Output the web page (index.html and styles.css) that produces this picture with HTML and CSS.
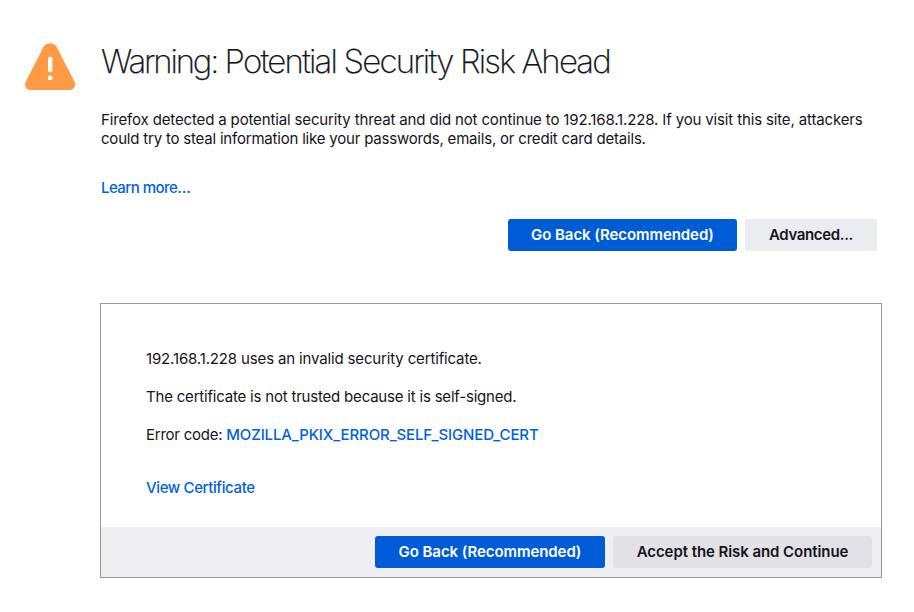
FILE: index.html
```html
<!DOCTYPE html>
<html lang="en">
<head>
<meta charset="utf-8">
<title>Warning: Potential Security Risk Ahead</title>
<link rel="stylesheet" href="styles.css">
</head>
<body>
<main class="page">
  <svg class="warning-icon" viewBox="0 0 50 48" aria-hidden="true">
    <path class="tri" d="M18.500 4C21.300 -1 28.900 -1 31.700 4L49.400 38.500C51.500 42.500 49 47 44.500 47H5.700C1.200 47 -1.300 42.500 .8 38.500Z"/>
    <rect class="mark" x="23" y="13.800" width="4.400" height="15.400" rx="1.800"/>
    <rect class="mark" x="23" y="32.500" width="4.400" height="4.500" rx="1.600"/>
  </svg>
  <div class="content">
    <h1><span class="lead">Warning:</span> Potential Security Risk Ahead</h1>
    <p class="intro"><span class="l1">Firefox detected a potential security threat and did not continue to 192.168.1.228. If you visit this site, attackers</span><br><span class="l2">could try to steal information like your passwords, emails, or credit card details.</span></p>
    <p class="learn"><a>Learn more…</a></p>
    <div class="actions">
      <button class="primary back-top">Go Back (Recommended)</button>
      <button class="secondary advanced">Advanced...</button>
    </div>
    <section class="panel">
      <div class="details">
        <p>192.168.1.228 uses an invalid security certificate.</p>
        <p class="reason">The certificate is not trusted because it is self-signed.</p>
        <p><span class="label">Error code: </span><a class="code">MOZILLA_PKIX_ERROR_SELF_SIGNED_CERT</a></p>
        <p class="view"><a>View Certificate</a></p>
      </div>
      <div class="footer">
        <button class="primary back-bottom">Go Back (Recommended)</button>
        <button class="secondary accept">Accept the Risk and Continue</button>
      </div>
    </section>
  </div>
</main>
</body>
</html>
```
FILE: styles.css
```css
* { box-sizing: border-box; }
body { margin: 0; background: #fff; color: #15141a; font: 15px/19px Inter, "Liberation Sans", sans-serif; letter-spacing: -.15px; }
.page { display: flex; height: 612px; padding: 43px 32px 0 25px; }
.warning-icon { flex: none; width: 50px; height: 48px; }
.tri { fill: #ff9a44; }
.mark { fill: #fff; }
.content { width: 782px; flex: none; margin-left: 25px; }
h1, p { margin: 0; white-space: nowrap; }
h1 { height: 38px; padding-left: 1px; font-size: 33px; line-height: 36px; font-weight: 200; letter-spacing: -1.83px; -webkit-text-stroke: .25px #15141a; }
.lead { letter-spacing: -2.18px; }
.intro { margin-top: 29px; padding-left: 1px; }
.l1 { letter-spacing: -.145px; }
.l2, .reason { letter-spacing: -.2px; }
.learn { margin-top: 30px; padding-left: 1px; }
a { color: #0061e0; font-weight: 450; }
.learn a { letter-spacing: -.55px; }
.label { letter-spacing: -.25px; }
.code { letter-spacing: -.12px; }
.actions { display: flex; justify-content: flex-end; gap: 8px; margin-top: 22px; padding-right: 5px; }
button { height: 32px; padding: 0; border: 0; border-radius: 3px; font: 600 15px/32px Inter, "Liberation Sans", sans-serif; letter-spacing: -.07px; white-space: nowrap; }
.primary { background: #005bd7; color: #fff; }
.secondary { background: #ebecf0; color: #15141a; }
.back-top { width: 229px; }
.advanced { width: 132px; letter-spacing: -.35px; }
.panel { margin-top: 52px; height: 275px; border: 1px solid #98989b; display: flex; flex-direction: column; }
.details { flex: 1; padding: 45px 45px 0; display: flex; flex-direction: column; gap: 19px; }
.view { margin-top: 15px; }
.view a { letter-spacing: -.38px; }
.footer { display: flex; justify-content: flex-end; gap: 8px; height: 50px; padding: 9px; background: #efeff2; }
.footer .secondary { background: #e2e1e6; }
.back-bottom { width: 230px; }
.accept { width: 259px; }
```
